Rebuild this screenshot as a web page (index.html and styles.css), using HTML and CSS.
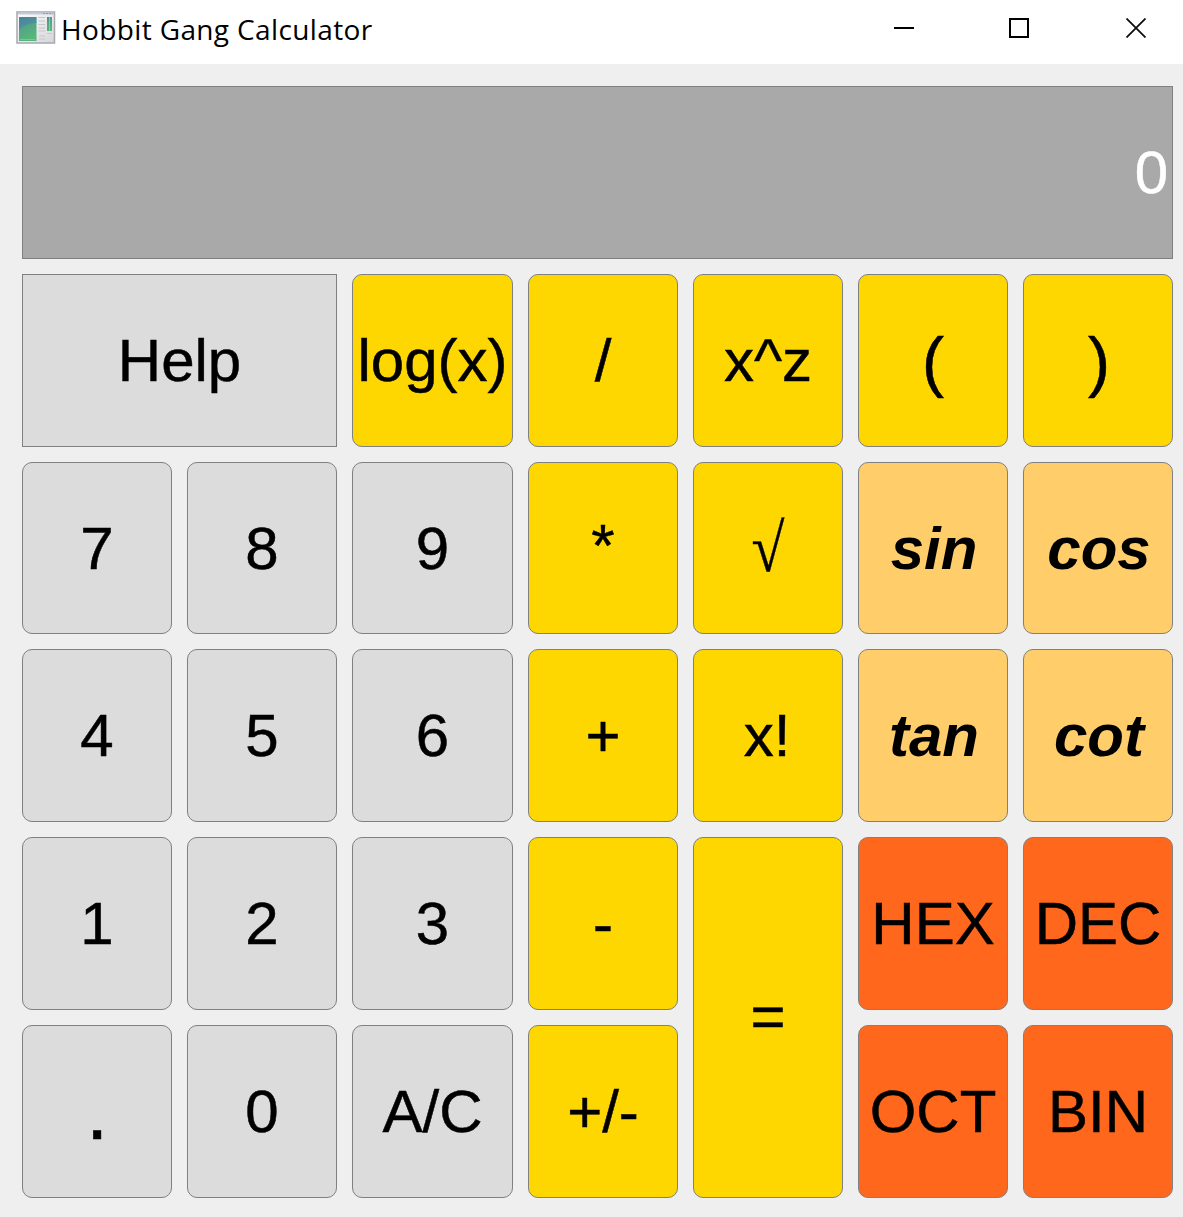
FILE: index.html
```html
<!DOCTYPE html>
<html lang="en">
<head>
<meta charset="utf-8">
<title>Hobbit Gang Calculator</title>
<link rel="stylesheet" href="styles.css">
</head>
<body>
<header class="titlebar">
  <svg class="app-icon" width="40" height="34" viewBox="0 0 40 34">
    <defs>
      <linearGradient id="pane" x1="0" y1="0" x2="0.4" y2="1"><stop offset="0" stop-color="#4d7fa5"/><stop offset=".45" stop-color="#55a28a"/><stop offset="1" stop-color="#55b878"/></linearGradient>
      <linearGradient id="frame" x1="0" y1="0" x2="1" y2="1"><stop offset="0" stop-color="#fff"/><stop offset="1" stop-color="#d5d5d7"/></linearGradient>
    </defs>
    <rect x="1" y="1" width="37.5" height="31" fill="url(#frame)" stroke="#a5a8b0" stroke-width="1.5"/>
    <path d="M2 2.5H38" stroke="#c4ccd8" stroke-width="2"/>
    <path d="M27 2.5H37" stroke="#949cab" stroke-width="1" stroke-dasharray="2 1"/>
    <rect x="3" y="6" width="17.5" height="24" fill="url(#pane)"/>
    <path d="M3 19Q9 12 20.500 12V6H3Z" fill="#4682a1" opacity=".5"/>
    <path d="M4 28.500H19" stroke="#78cf70"/>
    <path d="M22.500 6.500H29M22.500 10H29M22.500 13.500H29M22.500 17H29M22.500 20H29M23 25H29M23 28H29" stroke="#c5c6ca"/>
    <rect x="31" y="6" width="5" height="14" fill="url(#pane)"/>
    <path d="M33.500 6V20" stroke="#a4c5bb" stroke-width=".8"/>
    <path d="M31 22.500H36" stroke="#c9c9cd"/>
  </svg>
  <span class="title">Hobbit Gang Calculator</span>
  <div class="controls">
    <svg width="20" height="20" viewBox="0 0 20 20"><path d="M0 10H20" stroke="#000" stroke-width="2"/></svg>
    <svg width="20" height="20" viewBox="0 0 20 20"><path d="M1 1H19V19H1Z" fill="none" stroke="#000" stroke-width="2"/></svg>
    <svg width="20" height="20" viewBox="0 0 20 20"><path d="M.5 .5L19.500 19.500M19.500 .5L.5 19.500" stroke="#0c1012" stroke-width="1.800"/></svg>
  </div>
</header>
<main class="calculator">
  <output class="display">0</output>
  <button class="key help">Help</button>
  <button class="key op">log(x)</button>
  <button class="key op">/</button>
  <button class="key op">x^z</button>
  <button class="key op paren">(</button>
  <button class="key op paren close">)</button>

  <button class="key">7</button>
  <button class="key">8</button>
  <button class="key">9</button>
  <button class="key op times">*</button>
  <button class="key op root"><span class="radical">√</span></button>
  <button class="key trig">sin</button>
  <button class="key trig">cos</button>

  <button class="key">4</button>
  <button class="key">5</button>
  <button class="key">6</button>
  <button class="key op">+</button>
  <button class="key op factorial">x!</button>
  <button class="key trig">tan</button>
  <button class="key trig">cot</button>

  <button class="key">1</button>
  <button class="key">2</button>
  <button class="key">3</button>
  <button class="key op">-</button>
  <button class="key op equals">=</button>
  <button class="key base">HEX</button>
  <button class="key base">DEC</button>

  <button class="key point">.</button>
  <button class="key">0</button>
  <button class="key">A/C</button>
  <button class="key op">+/-</button>
  <button class="key base">OCT</button>
  <button class="key base">BIN</button>
</main>
</body>
</html>
```
FILE: styles.css
```css
* { box-sizing: border-box; }
body {
  margin: 0;
  min-height: 1217px;
  background: #efefef;
  font-family: "Liberation Sans", Arial, sans-serif;
}
.titlebar {
  display: flex;
  height: 64px;
  padding-left: 16px;
  background: #fff;
}
.app-icon { margin-top: 11px; }
.title {
  margin-left: 5px;
  padding-top: 9px;
  font: 28px/40px "Open Sans", "Noto Sans", sans-serif;
  letter-spacing: 0.37px;
  white-space: nowrap;
}
.controls {
  display: flex;
  gap: 97px;
  margin-left: auto;
  padding: 18px 37px 0 0;
}
.controls svg:first-child { margin-right: -2px; }
.calculator {
  display: grid;
  grid-template-columns: 150px 150px 161px repeat(4, 150px);
  grid-template-rows: 173px 173px 172px 173px 173px 173px;
  gap: 15px;
  padding: 22px 10px 19px 22px;
}
.display {
  grid-column: 1 / -1;
  display: flex;
  align-items: center;
  justify-content: flex-end;
  padding-right: 4px;
  border: 1px solid #808080;
  background: #a9a9a9;
  color: #fff;
  font-size: 60px;
  -webkit-text-stroke: 0.5px;
}
.key {
  display: flex;
  align-items: center;
  justify-content: center;
  min-width: 0;
  padding: 0;
  border: 1px solid #808080;
  border-radius: 10px;
  background: #dcdcdc;
  color: #000;
  font: 60px "Liberation Sans", Arial, sans-serif;
  -webkit-text-stroke: 0.5px;
}
.help { grid-column: span 2; border-radius: 0; }
.op { background: #ffd700; }
.paren { font-size: 66px; }
.close { padding-left: 2px; }
.times { padding-bottom: 5px; }
.root {
  font-family: "Liberation Serif", "Times New Roman", serif;
  -webkit-text-stroke: 0;
}
.radical {
  transform: scaleY(1.13);
  -webkit-text-stroke: 0.3px;
}
.factorial { padding-right: 2px; }
.trig {
  padding-left: 2px;
  background: #ffcd69;
  font-weight: bold;
  font-style: italic;
  -webkit-text-stroke: 0;
}
.base { background: #ff681c; }
.equals { grid-row: span 2; padding-bottom: 2px; }
.point { font-size: 80px; }
```
